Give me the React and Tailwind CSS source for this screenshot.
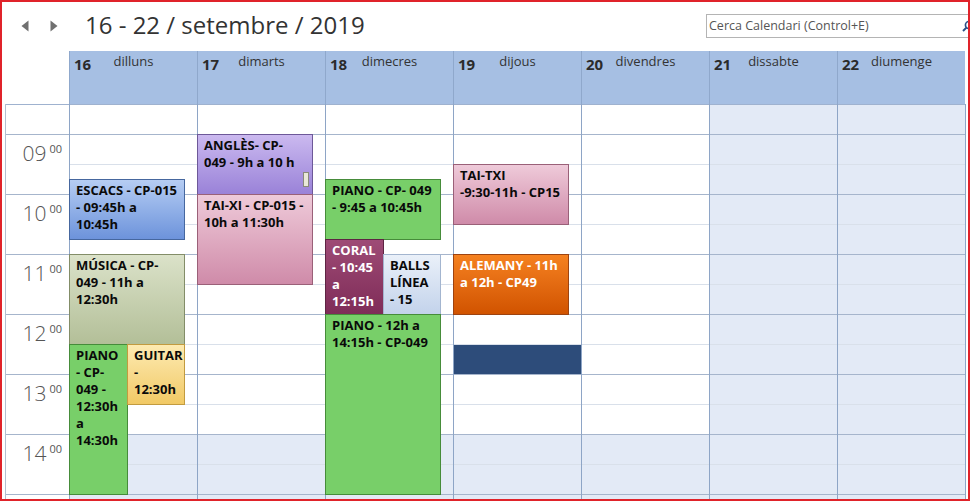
import React from "react";

const DAYS = [
  { n: "16", name: "dilluns", weekend: false },
  { n: "17", name: "dimarts", weekend: false },
  { n: "18", name: "dimecres", weekend: false },
  { n: "19", name: "dijous", weekend: false },
  { n: "20", name: "divendres", weekend: false },
  { n: "21", name: "dissabte", weekend: true },
  { n: "22", name: "diumenge", weekend: true },
];

// start / end in minutes from 09:00 ; x = offset inside column (from column border), w = width
const EVENTS = [
  { col: 0, s: 45, e: 105, x: 0, w: 116, cls: "bg-gradient-to-b from-[#b6cdf3] to-[#6d93db] border-[#46679f] text-[#0a0a0a]", lines: ["ESCACS - CP-015", "- 09:45h a", "10:45h"] },
  { col: 0, s: 120, e: 210, x: 0, w: 116, cls: "bg-gradient-to-b from-[#dbe2c9] to-[#b3bf98] border-[#838d68] text-[#0a0a0a]", lines: ["MÚSICA - CP-", "049 - 11h a", "12:30h"] },
  { col: 0, s: 210, e: 360, x: 0, w: 59, cls: "bg-[#78cf69] border-[#468c3a] text-[#0a0a0a]", lines: ["PIANO", "- CP-", "049 -", "12:30h", "a", "14:30h"] },
  { col: 0, s: 210, e: 270, x: 58, w: 58, cls: "bg-gradient-to-b from-[#fdeab0] to-[#f1c964] border-[#c29b3f] text-[#0a0a0a]", lines: ["GUITAR", "-", "12:30h"] },
  { col: 1, s: 0, e: 60, x: 0, w: 116, cls: "bg-gradient-to-b from-[#cbb9ef] to-[#9a82d8] border-[#6d5898] text-[#0a0a0a]", lines: ["ANGLÈS- CP-", "049 - 9h a 10 h"], grip: true },
  { col: 1, s: 60, e: 150, x: 0, w: 116, cls: "bg-gradient-to-b from-[#eecad9] to-[#cf8ba9] border-[#9a6078] text-[#0a0a0a]", lines: ["TAI-XI - CP-015 -", "10h a 11:30h"] },
  { col: 2, s: 45, e: 105, x: 0, w: 116, cls: "bg-[#78cf69] border-[#468c3a] text-[#0a0a0a]", lines: ["PIANO - CP- 049", "- 9:45 a 10:45h"] },
  { col: 2, s: 105, e: 180, x: 0, w: 59, cls: "bg-gradient-to-b from-[#9e4b76] to-[#7f2c58] border-[#5e2443] text-white", lines: ["CORAL", "- 10:45", "a", "12:15h"] },
  { col: 2, s: 120, e: 180, x: 58, w: 58, cls: "bg-gradient-to-b from-[#eaf0f9] to-[#c3d3eb] border-[#a3b5cf] text-[#0a0a0a]", lines: ["BALLS", "LÍNEA", "- 15"] },
  { col: 2, s: 180, e: 360, x: 0, w: 116, cls: "bg-[#78cf69] border-[#468c3a] text-[#0a0a0a]", lines: ["PIANO - 12h a", "14:15h - CP-049"] },
  { col: 3, s: 30, e: 90, x: 0, w: 116, cls: "bg-gradient-to-b from-[#eecad9] to-[#cf8ba9] border-[#9a6078] text-[#0a0a0a]", lines: ["TAI-TXI", "-9:30-11h - CP15"] },
  { col: 3, s: 120, e: 180, x: 0, w: 116, cls: "bg-gradient-to-b from-[#f5811f] to-[#d15300] border-[#9d4310] text-white", lines: ["ALEMANY - 11h", "a 12h - CP49"] },
];

function Event({ ev }) {
  const style = {
    top: 30 + ev.s,
    height: ev.e - ev.s + 1,
    left: ev.x - 1,
    width: ev.w,
  };
  return (
    <div
      className={`absolute border overflow-hidden pl-[6px] pt-[2px] font-bold text-[13px] leading-[17px] ${ev.cls}`}
      style={style}
    >
      {ev.lines.map((l, i) => (
        <div key={i} className="whitespace-nowrap">
          {l}
        </div>
      ))}
      {ev.grip && (
        <div className="absolute right-[3px] bottom-[7px] w-[6px] h-[15px] bg-[#e9e9d8] border border-[#8a8a7a]" />
      )}
    </div>
  );
}

function DayColumn({ day, idx }) {
  const slots = [];
  for (let i = 0; i < 14; i++) {
    const afterHours = day.weekend || i >= 11;
    const isHour = i % 2 === 1;
    const line = i === 0 ? "border-[#9fb2cf]" : isHour ? "border-[#a6b5cc]" : "border-[#d9e0ea]";
    slots.push(
      <div
        key={i}
        className={`h-[30px] shrink-0 border-t ${line} ${afterHours ? "bg-[#e3eaf6]" : "bg-white"}`}
      />
    );
  }
  return (
    <div className="relative w-[128px] shrink-0 border-l border-[#8ea5c6] flex flex-col">
      {slots}
      {EVENTS.filter((e) => e.col === idx).map((ev, i) => (
        <Event key={i} ev={ev} />
      ))}
      {idx === 3 && (
        <div className="absolute left-0 top-[241px] w-[127px] h-[29px] bg-[#2d4c7a]" />
      )}
    </div>
  );
}

function TimeLabel({ h }) {
  return (
    <div className="h-[60px] shrink-0 border-t border-[#a6b5cc] flex justify-end items-start pr-[7px] pt-[7px] text-[#555]">
      <span className="text-[21px] leading-[22px] font-light">{h}</span>
      <span className="text-[11px] leading-[12px] ml-[3px] mt-[1px]">00</span>
    </div>
  );
}

export default function App() {
  return (
    <div
      className="w-[970px] h-[501px] border-2 border-[#e0232a] bg-white overflow-hidden flex flex-col"
      style={{ fontFamily: '"Open Sans", "Noto Sans", sans-serif' }}
    >
      {/* top bar */}
      <div className="h-[49px] shrink-0 flex items-start">
        <div className="flex items-center mt-[18px] ml-[19px] shrink-0">
          <svg width="8" height="12" viewBox="0 0 8 12" className="block">
            <path d="M7.5 0.5 L0.5 6 L7.5 11.5 Z" fill="#707070" />
          </svg>
          <svg width="8" height="12" viewBox="0 0 8 12" className="block ml-[21px]">
            <path d="M0.5 0.5 L7.5 6 L0.5 11.5 Z" fill="#707070" />
          </svg>
        </div>
        <div className="ml-[27px] mt-[7px] shrink-0 whitespace-nowrap text-[24px] leading-[32px] text-[#333]">
          16 - 22 / setembre / 2019
        </div>
        <div className="ml-auto -mr-[14px] mt-[12px] shrink-0 w-[276px] h-[24px] border border-[#b4b4b4] bg-white flex items-center pl-[2px] pr-[7px]">
          <span className="text-[12.5px] text-[#555] whitespace-nowrap">Cerca Calendari (Control+E)</span>
          <svg width="12" height="12" viewBox="0 0 12 12" className="ml-auto">
            <circle cx="7" cy="5" r="3.6" fill="none" stroke="#2a4f87" strokeWidth="1.6" />
            <path d="M4.4 7.6 L1 11" stroke="#2a4f87" strokeWidth="2" />
          </svg>
        </div>
      </div>

      {/* day header */}
      <div className="h-[53px] shrink-0 flex">
        <div className="w-[67px] shrink-0" />
        {DAYS.map((d) => (
          <div
            key={d.n}
            className="w-[128px] shrink-0 border-l border-[#8fa8cc] bg-[#a6bfe3] grid grid-cols-[1fr_auto_1fr] items-start text-[#2b2b2b]"
          >
            <span className="pl-[4px] mt-[3px] text-[15px] leading-[20px] font-bold">{d.n}</span>
            <span className="mt-[2px] text-[13px] leading-[17px] text-[#333]">{d.name}</span>
            <span />
          </div>
        ))}
      </div>

      {/* body */}
      <div className="flex-1 flex overflow-hidden">
        <div className="w-[3px] shrink-0" />
        <div className="w-[64px] shrink-0 border-l border-[#b3bfd0] flex flex-col">
          <div className="h-[30px] shrink-0 border-t border-[#9fb2cf]" />
          {["09", "10", "11", "12", "13", "14"].map((h) => (
            <TimeLabel key={h} h={h} />
          ))}
          <div className="h-[30px] shrink-0 border-t border-[#a6b5cc]" />
        </div>
        {DAYS.map((d, i) => (
          <DayColumn key={d.n} day={d} idx={i} />
        ))}
        <div className="w-[2px] shrink-0 border-l border-[#8ea5c6]" />
      </div>
    </div>
  );
}
